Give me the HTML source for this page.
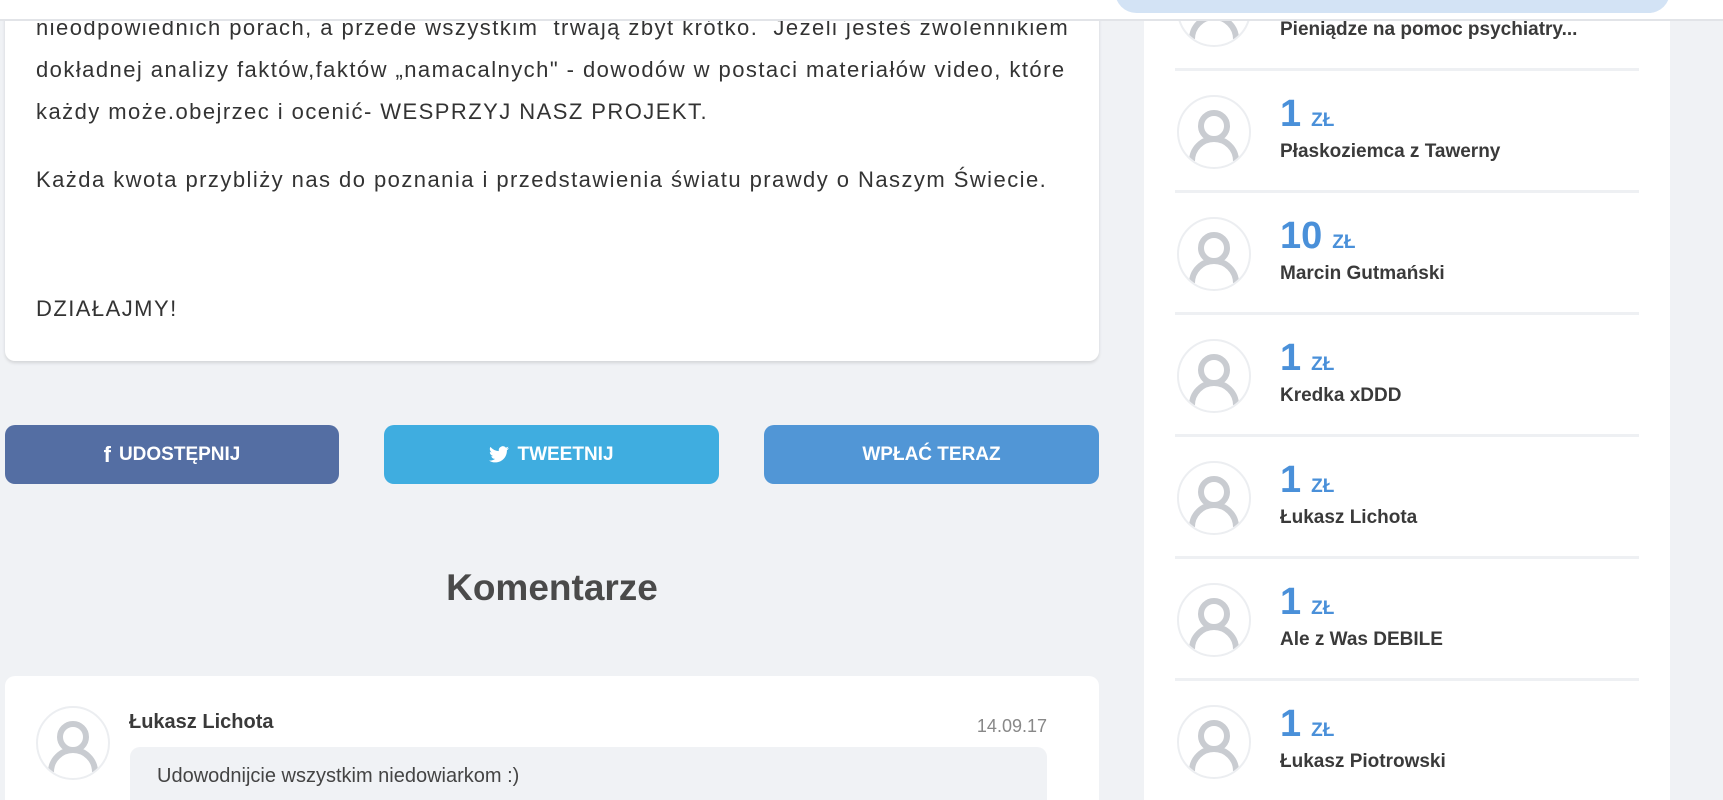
<!DOCTYPE html>
<html><head><meta charset="utf-8"><style>
*{margin:0;padding:0;box-sizing:border-box}
html{width:1723px;height:800px;overflow:hidden}
body{width:1723px;height:800px;overflow:hidden;background:#f0f2f5;font-family:"Liberation Sans",sans-serif;color:#333;position:relative}
.hdr{position:absolute;left:0;top:0;width:1723px;height:21px;background:#fff;border-bottom:2px solid #e2e4e8;z-index:5}
.pill{position:absolute;left:1115px;top:-30px;width:555px;height:43px;background:#d3e3f5;border-radius:22px}
.card{position:absolute;left:5px;top:0;width:1094px;height:361px;background:#fff;border-radius:0 0 10px 10px;box-shadow:0 2px 3px rgba(0,0,0,.12)}
.txt{position:absolute;left:36px;font-size:22px;letter-spacing:1.45px;white-space:nowrap;color:#333}
.btn{position:absolute;top:425px;height:59px;border-radius:10px;color:#fff;font-weight:bold;font-size:19px;display:flex;align-items:center;justify-content:center;gap:8px}
h2{position:absolute;left:0;width:1104px;top:567px;text-align:center;font-size:37px;font-weight:bold;color:#4a4a4a}
.cc{position:absolute;left:5px;top:676px;width:1094px;height:124px;background:#fff;border-radius:10px 10px 0 0;overflow:hidden}
.av{position:absolute;width:74px;height:74px;border-radius:50%;border:2px solid #eceef1;background:#fff;overflow:hidden}
.side{position:absolute;left:1144px;top:21px;width:526px;height:779px;background:#fff}
.row{position:absolute;left:1175px;width:464px;height:122px;border-bottom:3px solid #eef0f3}
.amt{position:absolute;left:105px;top:22px;color:#4a90d9;font-weight:bold;font-size:38px}
.amt span{font-size:19px;margin-left:10px}
.nm{position:absolute;left:105px;top:70px;font-weight:bold;font-size:19px;color:#3a3a3a;white-space:nowrap}
</style></head><body>
<div class="hdr"><div class="pill"></div></div>
<div class="card">
<div class="txt" style="top:15px;left:31px">nieodpowiednich porach, a przede wszystkim&nbsp; trwają zbyt krótko.&nbsp; Jeżeli jesteś zwolennikiem</div>
<div class="txt" style="top:57px;left:31px">dokładnej analizy faktów,faktów „namacalnych" - dowodów w postaci materiałów video, które</div>
<div class="txt" style="top:99px;left:31px">każdy może.obejrzec i ocenić- WESPRZYJ NASZ PROJEKT.</div>
<div class="txt" style="top:167px;left:31px">Każda kwota przybliży nas do poznania i przedstawienia światu prawdy o Naszym Świecie.</div>
<div class="txt" style="top:296px;left:31px">DZIAŁAJMY!</div>
</div>
<div class="btn" style="left:5px;width:334px;background:#546ea3"><span style="font-size:22px">f</span>UDOSTĘPNIJ</div>
<div class="btn" style="left:384px;width:335px;background:#3fade0"><svg width="20" height="17" viewBox="0 0 24 20"><path fill="#fff" d="M24 2.4a10 10 0 0 1-2.8.8A5 5 0 0 0 23.3.5a10 10 0 0 1-3.1 1.2A4.9 4.9 0 0 0 11.8 6 14 14 0 0 1 1.7.9a4.9 4.9 0 0 0 1.5 6.6A4.9 4.9 0 0 1 1 6.9a4.9 4.9 0 0 0 3.9 4.9 5 5 0 0 1-2.2.1 4.9 4.9 0 0 0 4.6 3.4A9.9 9.9 0 0 1 0 17.3 14 14 0 0 0 7.5 19.5c9.1 0 14-7.5 14-14v-.6A10 10 0 0 0 24 2.4z"/></svg>TWEETNIJ</div>
<div class="btn" style="left:764px;width:335px;background:#5196d6">WPŁAĆ TERAZ</div>
<h2>Komentarze</h2>
<div class="cc">
<div class="av" style="left:31px;top:30px"><svg width="70" height="70" viewBox="0 0 70 70"><circle cx="35" cy="29" r="13" fill="none" stroke="#c9ccd1" stroke-width="6"/><path d="M13 64a22 22 0 0 1 44 0" fill="none" stroke="#c9ccd1" stroke-width="6"/></svg></div>
<div style="position:absolute;left:124px;top:35px;font-weight:bold;font-size:20px;color:#3a3a3a">Łukasz Lichota</div>
<div style="position:absolute;right:52px;top:40px;font-size:18px;color:#888">14.09.17</div>
<div style="position:absolute;left:125px;top:71px;width:917px;height:100px;background:#f0f2f5;border-radius:10px"><div style="position:absolute;left:27px;top:18px;font-size:20px;color:#444">Udowodnijcie wszystkim niedowiarkom :)</div></div>
</div>
<div class="side"></div>
<div class="row" style="top:-51px"><div class="av" style="left:2px;top:24px"><svg width="70" height="70" viewBox="0 0 70 70"><circle cx="35" cy="29" r="13" fill="none" stroke="#c9ccd1" stroke-width="6"/><path d="M13 64a22 22 0 0 1 44 0" fill="none" stroke="#c9ccd1" stroke-width="6"/></svg></div><div class="nm">Pieniądze na pomoc psychiatry...</div></div>
<div class="row" style="top:71px"><div class="av" style="left:2px;top:24px"><svg width="70" height="70" viewBox="0 0 70 70"><circle cx="35" cy="29" r="13" fill="none" stroke="#c9ccd1" stroke-width="6"/><path d="M13 64a22 22 0 0 1 44 0" fill="none" stroke="#c9ccd1" stroke-width="6"/></svg></div><div class="amt">1<span>ZŁ</span></div><div class="nm">Płaskoziemca z Tawerny</div></div>
<div class="row" style="top:193px"><div class="av" style="left:2px;top:24px"><svg width="70" height="70" viewBox="0 0 70 70"><circle cx="35" cy="29" r="13" fill="none" stroke="#c9ccd1" stroke-width="6"/><path d="M13 64a22 22 0 0 1 44 0" fill="none" stroke="#c9ccd1" stroke-width="6"/></svg></div><div class="amt">10<span>ZŁ</span></div><div class="nm">Marcin Gutmański</div></div>
<div class="row" style="top:315px"><div class="av" style="left:2px;top:24px"><svg width="70" height="70" viewBox="0 0 70 70"><circle cx="35" cy="29" r="13" fill="none" stroke="#c9ccd1" stroke-width="6"/><path d="M13 64a22 22 0 0 1 44 0" fill="none" stroke="#c9ccd1" stroke-width="6"/></svg></div><div class="amt">1<span>ZŁ</span></div><div class="nm">Kredka xDDD</div></div>
<div class="row" style="top:437px"><div class="av" style="left:2px;top:24px"><svg width="70" height="70" viewBox="0 0 70 70"><circle cx="35" cy="29" r="13" fill="none" stroke="#c9ccd1" stroke-width="6"/><path d="M13 64a22 22 0 0 1 44 0" fill="none" stroke="#c9ccd1" stroke-width="6"/></svg></div><div class="amt">1<span>ZŁ</span></div><div class="nm">Łukasz Lichota</div></div>
<div class="row" style="top:559px"><div class="av" style="left:2px;top:24px"><svg width="70" height="70" viewBox="0 0 70 70"><circle cx="35" cy="29" r="13" fill="none" stroke="#c9ccd1" stroke-width="6"/><path d="M13 64a22 22 0 0 1 44 0" fill="none" stroke="#c9ccd1" stroke-width="6"/></svg></div><div class="amt">1<span>ZŁ</span></div><div class="nm">Ale z Was DEBILE</div></div>
<div class="row" style="top:681px;height:119px;border-bottom:0"><div class="av" style="left:2px;top:24px"><svg width="70" height="70" viewBox="0 0 70 70"><circle cx="35" cy="29" r="13" fill="none" stroke="#c9ccd1" stroke-width="6"/><path d="M13 64a22 22 0 0 1 44 0" fill="none" stroke="#c9ccd1" stroke-width="6"/></svg></div><div class="amt">1<span>ZŁ</span></div><div class="nm">Łukasz Piotrowski</div></div>
</body></html>
